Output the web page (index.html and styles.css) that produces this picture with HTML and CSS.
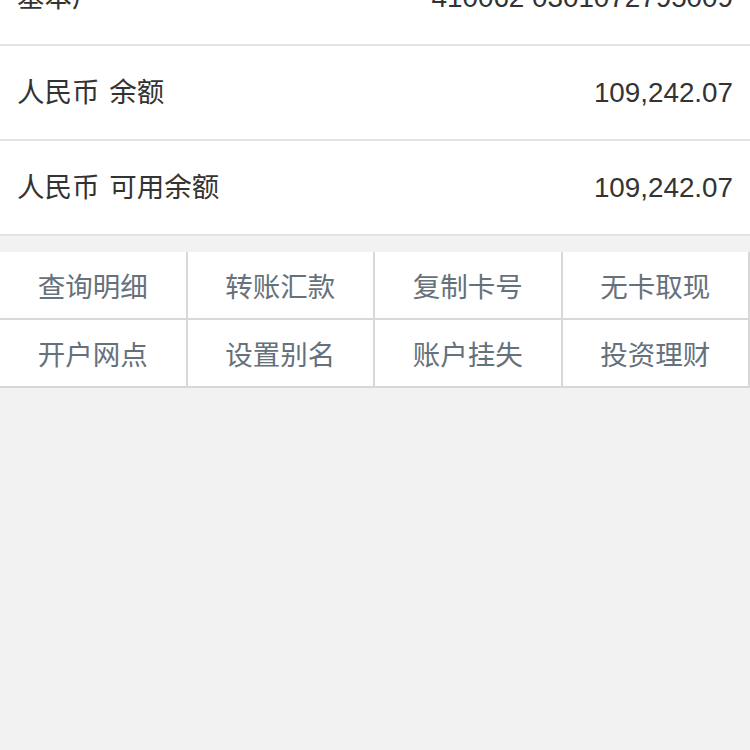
FILE: index.html
```html
<!DOCTYPE html>
<html>
<head>
<meta charset="utf-8">
<link rel="stylesheet" href="styles.css">
</head>
<body>
<div class="page">
  <div class="list">
    <div class="row"><span class="label">基本户</span><span class="value">410062 0301072795009</span></div>
    <div class="row"><span class="label">人民币 余额</span><span class="value">109,242.07</span></div>
    <div class="row"><span class="label">人民币 可用余额</span><span class="value">109,242.07</span></div>
  </div>
  <div class="actions">
    <div class="cell">查询明细</div>
    <div class="cell">转账汇款</div>
    <div class="cell">复制卡号</div>
    <div class="cell">无卡取现</div>
    <div class="cell">开户网点</div>
    <div class="cell">设置别名</div>
    <div class="cell">账户挂失</div>
    <div class="cell">投资理财</div>
  </div>
</div>
</body>
</html>
```
FILE: styles.css
```css
html, body {
  margin: 0;
  padding: 0;
  background: #f2f2f2;
  height: 100%;
  overflow: hidden;
}
.page {
  margin-top: -49px;
  font-family: "Liberation Sans", "Noto Sans CJK SC", sans-serif;
}
.list {
  background: #ffffff;
}
.row {
  display: flex;
  justify-content: space-between;
  align-items: center;
  height: 93px;
  padding: 0 17px;
  border-bottom: 2px solid #e3e3e3;
  color: #333333;
}
.label {
  font-size: 27.5px;
  line-height: 1;
  word-spacing: 2px;
}
.value {
  font-size: 27.8px;
  line-height: 1;
  color: #333333;
}
.actions {
  margin-top: 16px;
  display: grid;
  grid-template-columns: repeat(4, 1fr);
  background: #ffffff;
  width: 750px;
}
.cell {
  height: 66px;
  display: flex;
  align-items: center;
  justify-content: center;
  border-right: 2px solid #d8d8d8;
  border-bottom: 2px solid #d8d8d8;
  font-size: 27.5px;
  color: #65717b;
}
```
